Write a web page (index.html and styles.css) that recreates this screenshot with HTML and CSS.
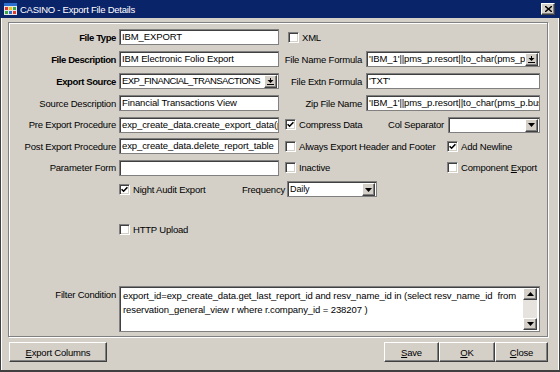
FILE: index.html
```html
<!DOCTYPE html>
<html>
<head>
<meta charset="utf-8">
<title>CASINO - Export File Details</title>
<link rel="stylesheet" href="styles.css">
</head>
<body>
<div class="window">
  <div class="titlebar">
    <svg class="app-icon" width="13" height="12" viewBox="0 0 13 12">
      <rect x="0" y="0" width="13" height="12" fill="#e8e8e8"/>
      <rect x="0" y="0" width="13" height="3" fill="#2a6fd0"/>
      <rect x="1" y="4" width="3" height="3" fill="#e23b2e"/>
      <rect x="5" y="4" width="3" height="3" fill="#f3c21a"/>
      <rect x="9" y="4" width="3" height="3" fill="#3aa845"/>
      <rect x="1" y="8" width="3" height="3" fill="#3aa845"/>
      <rect x="5" y="8" width="3" height="3" fill="#2a6fd0"/>
      <rect x="9" y="8" width="3" height="3" fill="#e23b2e"/>
    </svg>
    <span class="title">CASINO - Export File Details</span>
    <div class="tb-close">
      <svg width="7" height="6" viewBox="0 0 7 6"><path d="M0 0L7 6M7 0L0 6" stroke="#000" stroke-width="1.4"/></svg>
    </div>
  </div>
  <div class="frame">
    <div class="panel">
      <div class="row">
        <span class="lbl b">File Type</span>
        <div class="field w160"><span class="val">IBM_EXPORT</span></div>
        <label class="chk ml9"><span class="box"></span><span class="ctext">XML</span></label>
      </div>
      <div class="row">
        <span class="lbl b">File Description</span>
        <div class="field w160"><span class="val">IBM Electronic Folio Export</span></div>
        <span class="rlbl">File Name Formula</span>
        <div class="field w174"><span class="val">'IBM_1'||pms_p.resort||to_char(pms_p.b</span><span class="lov"><svg width="7" height="7" viewBox="0 0 7 7"><rect x="3" y="0" width="1" height="2" fill="#000"/><path d="M0.5 2H6.5L3.5 5Z" fill="#000"/><rect x="0" y="6" width="7" height="1" fill="#000"/></svg></span></div>
      </div>
      <div class="row">
        <span class="lbl b">Export Source</span>
        <div class="field w160"><span class="val tight">EXP_FINANCIAL_TRANSACTIONS</span><span class="lov"><svg width="7" height="7" viewBox="0 0 7 7"><rect x="3" y="0" width="1" height="2" fill="#000"/><path d="M0.5 2H6.5L3.5 5Z" fill="#000"/><rect x="0" y="6" width="7" height="1" fill="#000"/></svg></span></div>
        <span class="rlbl">File Extn Formula</span>
        <div class="field w174"><span class="val">'TXT'</span></div>
      </div>
      <div class="row">
        <span class="lbl">Source Description</span>
        <div class="field w160"><span class="val">Financial Transactions View</span></div>
        <span class="rlbl">Zip File Name</span>
        <div class="field w174"><span class="val">'IBM_1'||pms_p.resort||to_char(pms_p.busi</span></div>
      </div>
      <div class="row h21">
        <span class="lbl">Pre Export Procedure</span>
        <div class="field w160"><span class="val">exp_create_data.create_export_data(p</span></div>
        <div class="cell w100 ml6"><label class="chk"><span class="box on"><svg width="7" height="7" viewBox="0 0 7 7"><path d="M0.6 3.2L2.6 5.2L6.4 1.2" stroke="#000" stroke-width="1.6" fill="none"/></svg></span><span class="ctext">Compress Data</span></label></div>
        <span class="rlbl2">Col Separator</span>
        <div class="field w92 combo"><span class="val"></span><span class="ddb"><svg width="7" height="4" viewBox="0 0 7 4"><path d="M0 0H7L3.5 4Z" fill="#000"/></svg></span></div>
      </div>
      <div class="row">
        <span class="lbl">Post Export Procedure</span>
        <div class="field w160"><span class="val">exp_create_data.delete_report_table</span></div>
        <div class="cell w162 ml6"><label class="chk"><span class="box"></span><span class="ctext">Always Export Header and Footer</span></label></div>
        <label class="chk"><span class="box on"><svg width="7" height="7" viewBox="0 0 7 7"><path d="M0.6 3.2L2.6 5.2L6.4 1.2" stroke="#000" stroke-width="1.6" fill="none"/></svg></span><span class="ctext">Add Newline</span></label>
      </div>
      <div class="row h21">
        <span class="lbl">Parameter Form</span>
        <div class="field w160"><span class="val"></span></div>
        <div class="cell w162 ml6"><label class="chk"><span class="box"></span><span class="ctext">Inactive</span></label></div>
        <label class="chk"><span class="box"></span><span class="ctext">Component <u>E</u>xport</span></label>
      </div>
      <div class="row">
        <span class="indent"></span>
        <div class="cell w121"><label class="chk"><span class="box on"><svg width="7" height="7" viewBox="0 0 7 7"><path d="M0.6 3.2L2.6 5.2L6.4 1.2" stroke="#000" stroke-width="1.6" fill="none"/></svg></span><span class="ctext">Night Audit Export</span></label></div>
        <span class="flbl">Frequency</span>
        <div class="field w90 combo"><span class="val small">Daily</span><span class="ddb"><svg width="7" height="4" viewBox="0 0 7 4"><path d="M0 0H7L3.5 4Z" fill="#000"/></svg></span></div>
      </div>
      <div class="row http">
        <span class="indent"></span>
        <label class="chk"><span class="box"></span><span class="ctext">HTTP Upload</span></label>
      </div>
      <div class="row filter">
        <span class="lbl top">Filter Condition</span>
        <div class="textarea">
          <div class="tatext">export_id=exp_create_data.get_last_report_id and resv_name_id in (select resv_name_id  from
reservation_general_view r where r.company_id = 238207 )</div>
          <div class="vscroll">
            <span class="sbtn"><svg width="7" height="4" viewBox="0 0 7 4"><path d="M0 4H7L3.5 0Z" fill="#000"/></svg></span>
            <span class="strack"></span>
            <span class="sbtn"><svg width="7" height="4" viewBox="0 0 7 4"><path d="M0 0H7L3.5 4Z" fill="#000"/></svg></span>
          </div>
        </div>
      </div>
    </div>
    <div class="buttons">
      <button class="btn w98"><u>E</u>xport Columns</button>
      <div class="btn-group">
        <button class="btn w55"><u>S</u>ave</button>
        <button class="btn w56"><u>O</u>K</button>
        <button class="btn w53"><u>C</u>lose</button>
      </div>
    </div>
  </div>
</div>
</body>
</html>
```

FILE: styles.css
```css
* { box-sizing: border-box; }
html, body { margin: 0; padding: 0; }
body {
  width: 560px;
  height: 372px;
  overflow: hidden;
  background: #d4d0c8;
  font-family: "Liberation Sans", Arial, sans-serif;
  font-size: 9.5px;
  letter-spacing: -0.2px;
  color: #000;
}
.window {
  width: 560px;
  height: 372px;
  display: flex;
  flex-direction: column;
}
.titlebar {
  height: 18px;
  flex: none;
  background: #0a246a;
  display: flex;
  align-items: center;
  padding: 0 4px 0 4px;
  color: #fff;
}
.app-icon { display: block; margin-right: 3px; flex: none; }
.title { flex: 1; font-size: 9.5px; letter-spacing: -0.25px; white-space: nowrap; }
.tb-close {
  width: 14px;
  height: 12px;
  background: #d4d0c8;
  border: 1px solid;
  border-color: #fff #404040 #404040 #fff;
  box-shadow: inset -1px -1px 0 #808080;
  display: flex;
  align-items: center;
  justify-content: center;
  margin-right: 1px;
}
.tb-close svg { display: block; }
.frame {
  flex: 1;
  border-left: 1px solid #404040;
  border-right: 1px solid #404040;
  border-bottom: 2px solid #404040;
  box-shadow: inset 1px 0 0 #fff, inset -1px 0 0 #fff;
  padding: 4px 0 0 7px;
}
.panel {
  width: 540px;
  height: 315px;
  border: 1px solid #808080;
  box-shadow: 1px 1px 0 #fff, inset 1px 1px 0 #fff;
  padding: 3px 0 0 2px;
}
.row {
  display: flex;
  align-items: center;
  height: 22px;
  white-space: nowrap;
}
.row.h21 { height: 21px; }
.lbl {
  width: 105px;
  margin-right: 3px;
  text-align: right;
  flex: none;
}
.lbl.b { font-weight: bold; letter-spacing: -0.4px; }
.lbl.top { align-self: flex-start; line-height: 14px; padding-top: 2px; }
.rlbl {
  width: 83px;
  margin-right: 4px;
  text-align: right;
  flex: none;
}
.rlbl2 {
  width: 59px;
  margin-right: 4px;
  text-align: right;
  flex: none;
}
.flbl {
  width: 45px;
  margin-right: 2px;
  text-align: right;
  flex: none;
}
.indent { width: 108px; flex: none; }
.cell { flex: none; }
.w100 { width: 100px; }
.w121 { width: 121px; }
.w162 { width: 162px; }
.ml6 { margin-left: 6px; }
.ml9 { margin-left: 9px; }

.field {
  height: 16px;
  flex: none;
  background: #fff;
  border: 1px solid #808080;
  box-shadow: inset 1px 1px 0 #404040;
  display: flex;
  align-items: center;
  overflow: hidden;
}
.w160 { width: 160px; }
.w174 { width: 174px; }
.w92 { width: 92px; }
.w90 { width: 90px; }
.val {
  flex: 1;
  min-width: 0;
  overflow: hidden;
  padding-left: 2px;
  white-space: nowrap;
  line-height: 14px;
  letter-spacing: -0.1px;
}
.val.tight { letter-spacing: -0.6px; }
.val.small { font-size: 9px; }
.lov, .ddb {
  flex: none;
  width: 13px;
  height: 13px;
  margin-right: 1px;
  margin-top: 1px;
  background: #d4d0c8;
  border: 1px solid;
  border-color: #fff #404040 #404040 #fff;
  box-shadow: inset -1px -1px 0 #808080;
  display: flex;
  align-items: center;
  justify-content: center;
}
.lov svg, .ddb svg { display: block; }

.chk {
  display: flex;
  align-items: center;
  flex: none;
}
.box {
  width: 11px;
  height: 11px;
  flex: none;
  background: #fff;
  border: 1px solid;
  border-color: #808080 #fff #fff #808080;
  box-shadow: inset 1px 1px 0 #404040, inset -1px -1px 0 #d4d0c8;
  display: flex;
  align-items: center;
  justify-content: center;
}
.box svg { display: block; }
.ctext { margin-left: 3px; }

.row.http { margin-top: 18px; }
.row.filter {
  height: 46px;
  margin-top: 46px;
  align-items: flex-start;
}
.textarea {
  width: 421px;
  height: 46px;
  flex: none;
  background: #fff;
  border: 1px solid #808080;
  box-shadow: inset 1px 1px 0 #404040;
  display: flex;
  padding: 1px;
}
.tatext {
  flex: 1;
  min-width: 0;
  overflow: hidden;
  white-space: pre;
  line-height: 14px;
  padding: 1px 0 0 2px;
  letter-spacing: -0.1px;
}
.vscroll {
  width: 14px;
  flex: none;
  display: flex;
  flex-direction: column;
  margin-right: 1px;
}
.sbtn {
  height: 12px;
  flex: none;
  background: #d4d0c8;
  border: 1px solid;
  border-color: #fff #404040 #404040 #fff;
  box-shadow: inset -1px -1px 0 #808080;
  display: flex;
  align-items: center;
  justify-content: center;
}
.sbtn svg { display: block; }
.strack {
  flex: 1;
  background: #e6e3de;
}

.buttons {
  width: 540px;
  height: 20px;
  margin-top: 5px;
  display: flex;
  justify-content: space-between;
  padding-left: 1px;
}
.btn-group { display: flex; }
.btn {
  height: 20px;
  padding: 0;
  margin: 0;
  font: inherit;
  letter-spacing: inherit;
  color: #000;
  background: #d4d0c8;
  border: 1px solid;
  border-color: #fff #404040 #404040 #fff;
  box-shadow: inset -1px -1px 0 #808080;
  text-align: center;
}
.w98 { width: 98px; }
.w55 { width: 55px; }
.w56 { width: 56px; }
.w53 { width: 53px; }
```
